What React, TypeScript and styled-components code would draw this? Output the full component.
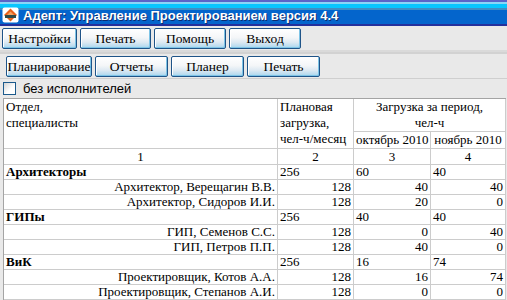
import React from "react";
import styled, { createGlobalStyle } from "styled-components";

const Global = createGlobalStyle`
  html, body { margin: 0; padding: 0; }
  body { background: #e9e9e9; width: 507px; height: 300px; overflow: hidden; }
`;

const Window = styled.div`
  width: 507px;
  height: 300px;
  overflow: hidden;
  background: #e9e9e9;
  display: flex;
  flex-direction: column;
  & > * { flex-shrink: 0; }
`;

const TitleBar = styled.div`
  height: 26px;
  box-sizing: border-box;
  display: flex;
  align-items: center;
  gap: 4px;
  padding: 3px 0 0 2px;
  background: linear-gradient(
    to bottom,
    #5a64c8 0px,
    #5a64c8 2px,
    #8ad6f6 2px,
    #8ad6f6 4px,
    #08c6fe 4px,
    #08c6fe 8px,
    #3f8fc4 8px,
    #3f8fc4 10px,
    #0465cc 10px,
    #0465cc 24px,
    #24309c 24px,
    #24309c 26px
  );
`;

const TitleText = styled.span`
  color: #ffffff;
  font-family: "Liberation Sans", Arial, sans-serif;
  font-weight: bold;
  font-size: 13px;
  line-height: 16px;
  margin-top: 2px;
  text-shadow: 1px 1px 0 #0a2a70;
`;

const Toolbar = styled.div<{ $pad: number }>`
  display: flex;
  gap: 3px;
  padding: 2px 0 0 ${(p) => p.$pad}px;
  height: 24px;
  box-sizing: border-box;
`;

const Separator = styled.div`
  height: 4px;
  box-sizing: border-box;
  border-top: 2px solid #dadada;
  border-bottom: 2px solid #d2d2d2;
`;

const Button = styled.button<{ $w: number }>`
  width: ${(p) => p.$w}px;
  height: 21px;
  padding: 0;
  margin: 0;
  border: 1px solid #1f5488;
  border-radius: 2px;
  box-shadow: inset -1px -1px 0 #7ec4e6, inset 1px 1px 0 #ffffff;
  background: linear-gradient(
    to bottom,
    #ffffff 0%,
    #f4f6f8 45%,
    #dde9f2 70%,
    #a9d6ee 100%
  );
  font-family: "Liberation Serif", "Times New Roman", serif;
  font-size: 13.5px;
  color: #000;
  line-height: 18px;
  white-space: nowrap;
`;

const LineBelow = styled.div`
  height: 1px;
  background: #cfcfcf;
`;

const CheckRow = styled.label`
  display: flex;
  align-items: center;
  gap: 7px;
  height: 19px;
  padding-left: 3px;
  font-family: "Liberation Sans", Arial, sans-serif;
  font-size: 13px;
  color: #000;
`;

const CheckBox = styled.span`
  width: 11px;
  height: 11px;
  border: 1px solid #1c5a8c;
  background: linear-gradient(135deg, #d4d4d4 0%, #ffffff 60%);
  display: inline-block;
`;

const Table = styled.table`
  margin-left: 3px;
  width: 502px;
  table-layout: fixed;
  border-collapse: separate;
  border-spacing: 0;
  background: #ffffff;
  border-left: 1px solid #a4a4a4;
  border-top: 1px solid #a4a4a4;
`;

const Cell = styled.td<{ $align?: string; $bold?: boolean; $valign?: string; $h?: number }>`
  border-right: 1px solid #cccccc;
  border-bottom: 1px solid #cccccc;
  padding: 0 2px;
  text-align: ${(p) => p.$align ?? "left"};
  vertical-align: ${(p) => p.$valign ?? "middle"};
  font-family: "Liberation Serif", "Times New Roman", serif;
  font-size: 13px;
  color: #000;
  font-weight: ${(p) => (p.$bold ? "bold" : "normal")};
  white-space: nowrap;
  overflow: hidden;
  height: ${(p) => p.$h ?? 14}px;
  line-height: 14px;
  box-sizing: content-box;
`;

const HeadText = styled.div`
  line-height: 16px;
  white-space: normal;
`;

const Logo = () => (
  <svg width="17" height="16" viewBox="0 0 17 16">
    <rect x="0.5" y="0.5" width="16" height="15" rx="2" fill="#ffffff" />
    <polygon points="8.5,1.5 15,8 8.5,14.5 2,8" fill="#e8601c" />
    <polygon points="5,8 8.5,4.5 12,8 8.5,11.5" fill="#f3a060" />
    <rect x="3" y="8" width="11" height="3" fill="#2f4a48" />
  </svg>
);

type Row = { group: boolean; name: string; plan: string; a: string; b: string };

const rows: Row[] = [
  { group: true, name: "Архитекторы", plan: "256", a: "60", b: "40" },
  { group: false, name: "Архитектор, Верещагин В.В.", plan: "128", a: "40", b: "40" },
  { group: false, name: "Архитектор, Сидоров И.И.", plan: "128", a: "20", b: "0" },
  { group: true, name: "ГИПы", plan: "256", a: "40", b: "40" },
  { group: false, name: "ГИП, Семенов С.С.", plan: "128", a: "0", b: "40" },
  { group: false, name: "ГИП, Петров П.П.", plan: "128", a: "40", b: "0" },
  { group: true, name: "ВиК", plan: "256", a: "16", b: "74" },
  { group: false, name: "Проектировщик, Котов А.А.", plan: "128", a: "16", b: "74" },
  { group: false, name: "Проектировщик, Степанов А.И.", plan: "128", a: "0", b: "0" },
  { group: false, name: "", plan: "", a: "", b: "" },
];

export default function App() {
  return (
    <Window>
      <Global />
      <TitleBar>
        <Logo />
        <TitleText>Адепт: Управление Проектированием версия 4.4</TitleText>
      </TitleBar>
      <Toolbar $pad={2}>
        <Button $w={75}>Настройки</Button>
        <Button $w={71}>Печать</Button>
        <Button $w={72}>Помощь</Button>
        <Button $w={72}>Выход</Button>
      </Toolbar>
      <Separator />
      <Toolbar $pad={6}>
        <Button $w={86}>Планирование</Button>
        <Button $w={73}>Отчеты</Button>
        <Button $w={73}>Планер</Button>
        <Button $w={73}>Печать</Button>
      </Toolbar>
      <LineBelow />
      <CheckRow>
        <CheckBox />
        без исполнителей
      </CheckRow>
      <Table>
        <colgroup>
          <col style={{ width: 274 }} />
          <col style={{ width: 76 }} />
          <col style={{ width: 77 }} />
          <col style={{ width: 75 }} />
        </colgroup>
        <tbody>
          <tr>
            <Cell rowSpan={2} $valign="top" $h={47}>
              <HeadText>
                Отдел,
                <br />
                специалисты
              </HeadText>
            </Cell>
            <Cell rowSpan={2} $valign="top" $h={47}>
              <HeadText>
                Плановая
                <br />
                загрузка,
                <br />
                чел-ч/месяц
              </HeadText>
            </Cell>
            <Cell colSpan={2} $align="center" $valign="top" $h={30}>
              <HeadText>
                Загрузка за период,
                <br />
                чел-ч
              </HeadText>
            </Cell>
          </tr>
          <tr>
            <Cell $align="center" $h={16}>
              октябрь 2010
            </Cell>
            <Cell $align="center" $h={16}>
              ноябрь 2010
            </Cell>
          </tr>
          <tr>
            <Cell $align="center" $h={15}>1</Cell>
            <Cell $align="center" $h={15}>2</Cell>
            <Cell $align="center" $h={15}>3</Cell>
            <Cell $align="center" $h={15}>4</Cell>
          </tr>
          {rows.map((r, i) => (
            <tr key={i}>
              <Cell $bold={r.group} $align={r.group ? "left" : "right"}>{r.name}</Cell>
              <Cell $align={r.group ? "left" : "right"}>{r.plan}</Cell>
              <Cell $align={r.group ? "left" : "right"}>{r.a}</Cell>
              <Cell $align={r.group ? "left" : "right"}>{r.b}</Cell>
            </tr>
          ))}
        </tbody>
      </Table>
    </Window>
  );
}
